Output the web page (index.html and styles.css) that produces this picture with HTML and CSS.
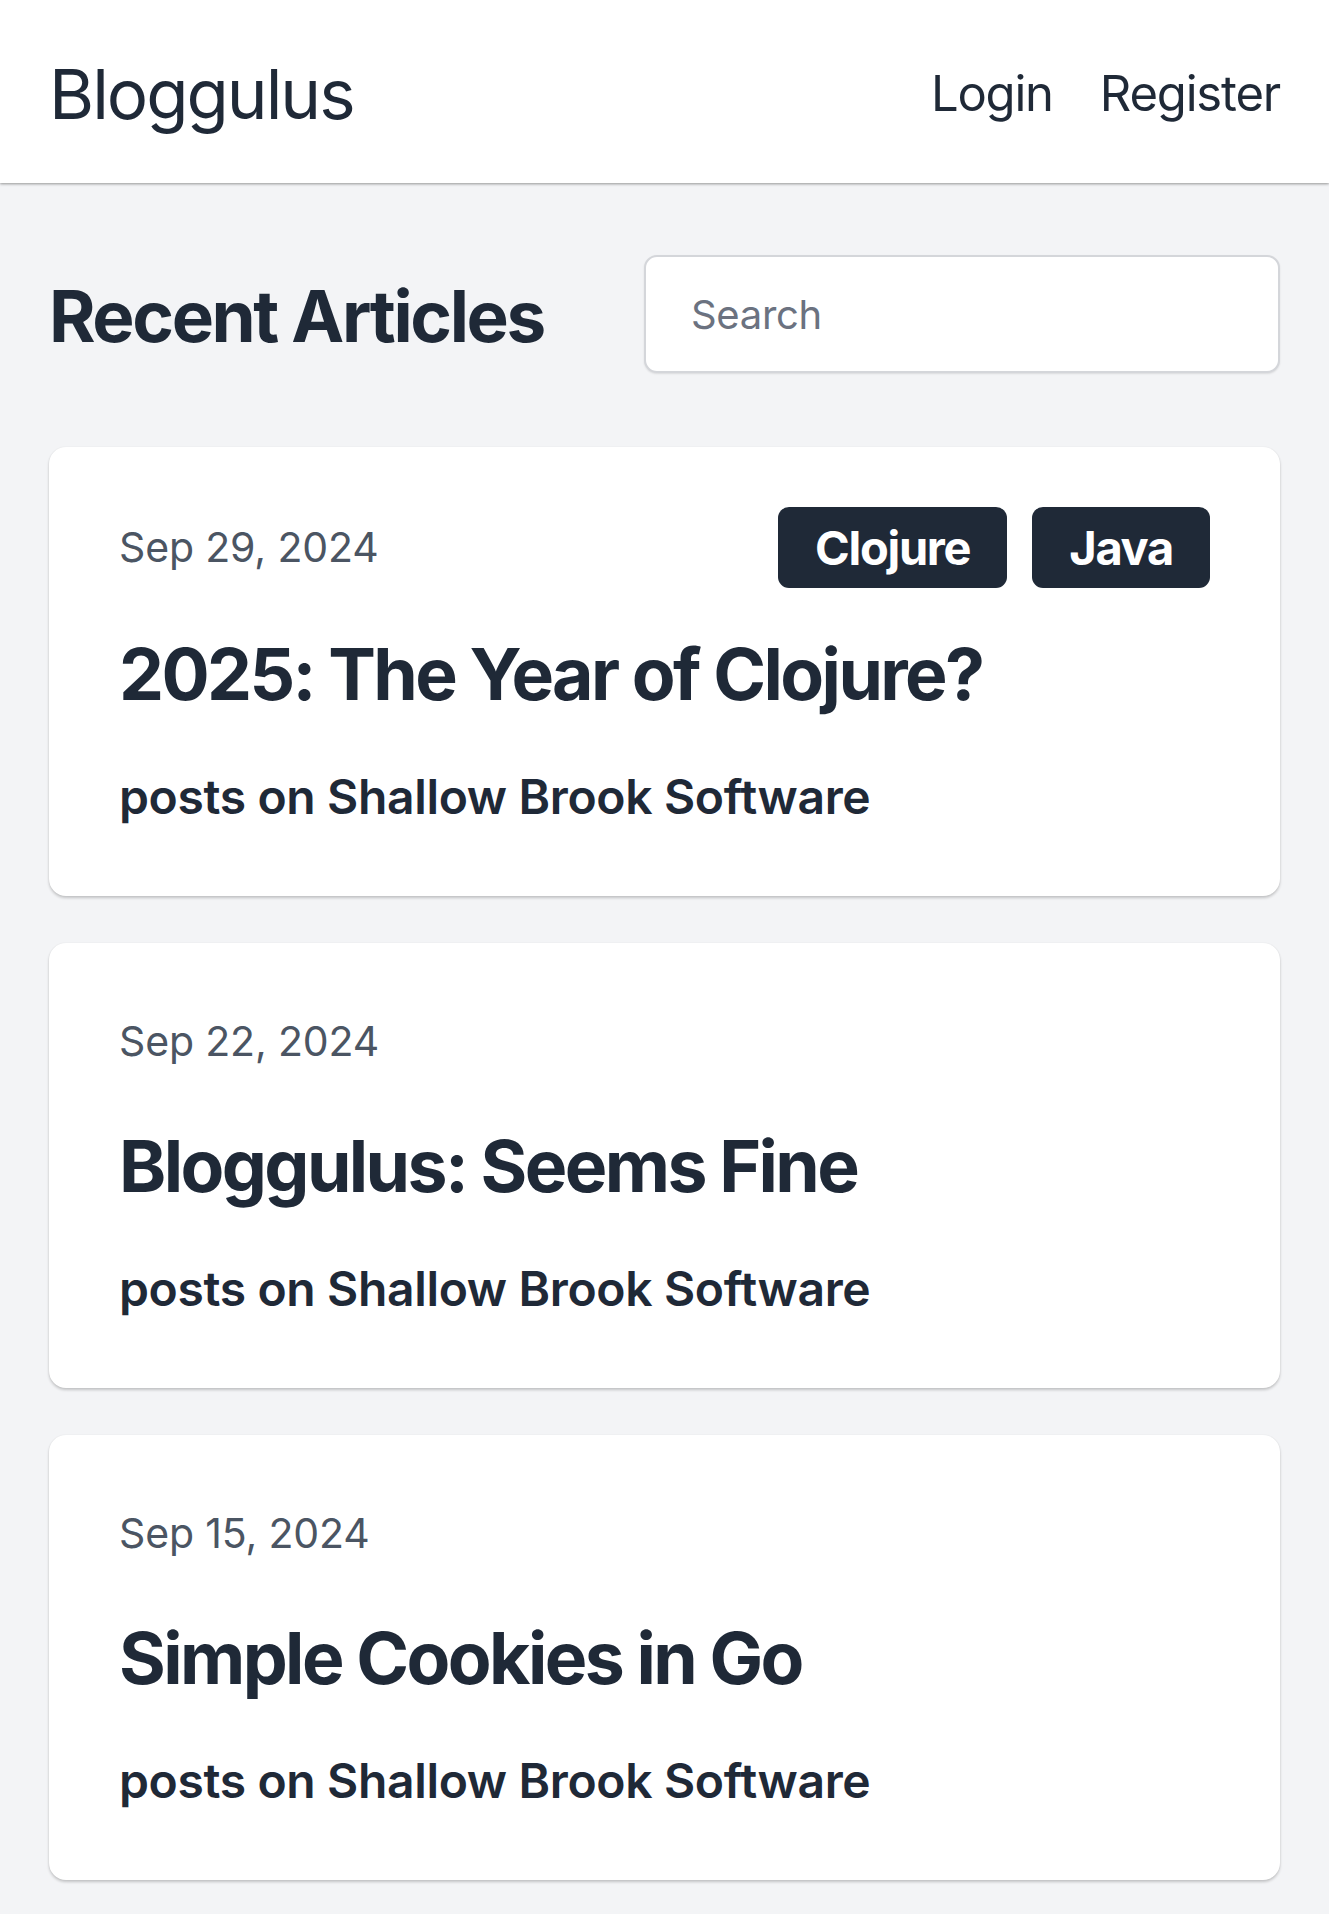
FILE: index.html
```html
<!DOCTYPE html>
<html lang="en">
<head>
<meta charset="utf-8">
<title>Bloggulus</title>
<link rel="stylesheet" href="styles.css">
</head>
<body>
<header class="site-header">
  <a class="brand" href="#">Bloggulus</a>
  <nav class="nav">
    <a class="nav-link" href="#">Login</a>
    <a class="nav-link" href="#">Register</a>
  </nav>
</header>
<main class="content">
  <div class="page-head">
    <h1 class="page-title">Recent Articles</h1>
    <input class="search" type="text" placeholder="Search">
  </div>
  <div class="articles">
    <article class="card">
      <div class="card-top">
        <span class="date">Sep 29, 2024</span>
        <div class="tags">
          <a class="tag" href="#">Clojure</a>
          <a class="tag" href="#">Java</a>
        </div>
      </div>
      <h2 class="card-title">2025: The Year of Clojure?</h2>
      <p class="card-source">posts on Shallow Brook Software</p>
    </article>
    <article class="card">
      <div class="card-top">
        <span class="date">Sep 22, 2024</span>
      </div>
      <h2 class="card-title">Bloggulus: Seems Fine</h2>
      <p class="card-source">posts on Shallow Brook Software</p>
    </article>
    <article class="card">
      <div class="card-top">
        <span class="date">Sep 15, 2024</span>
      </div>
      <h2 class="card-title">Simple Cookies in Go</h2>
      <p class="card-source">posts on Shallow Brook Software</p>
    </article>
  </div>
</main>
</body>
</html>
```

FILE: styles.css
```css
* { box-sizing: border-box; }

body {
  margin: 0;
  background: #f3f4f6;
  color: #1f2937;
  font-family: Inter, "Noto Sans", "DejaVu Sans", sans-serif;
}

a { color: inherit; text-decoration: none; }

.site-header {
  height: 183px;
  background: #ffffff;
  padding: 6px 49px 0;
  display: flex;
  align-items: center;
  justify-content: space-between;
  box-shadow: 0 1px 3px rgba(0, 0, 0, 0.28), 0 1px 2px rgba(0, 0, 0, 0.14);
  position: relative;
}

.brand {
  font-size: 69px;
  font-weight: 400;
  line-height: 1.2;
  letter-spacing: -2px;
}

.nav {
  display: flex;
  gap: 47px;
}

.nav-link {
  font-size: 49px;
  font-weight: 400;
  line-height: 1.2;
  letter-spacing: -1.2px;
}

.content {
  padding: 72px 49px 40px;
}

.page-head {
  display: flex;
  align-items: center;
  justify-content: space-between;
}

.page-title {
  margin: 0;
  padding-top: 5px;
  font-size: 71px;
  font-weight: 700;
  line-height: 1.2;
  letter-spacing: -2.4px;
}

.search {
  width: 636px;
  height: 118px;
  border: 2px solid #d4d6da;
  border-radius: 13px;
  background: #ffffff;
  padding: 0 45px;
  font-family: inherit;
  font-size: 40px;
  letter-spacing: -0.3px;
  color: #1f2937;
  box-shadow: 0 1px 2px rgba(0, 0, 0, 0.1);
  outline: none;
}

.search::placeholder {
  color: #6b7280;
}

.articles {
  margin-top: 74px;
  display: flex;
  flex-direction: column;
  gap: 47px;
}

.card {
  background: #ffffff;
  border-radius: 17px;
  padding: 60px 70px 63px;
  box-shadow: 0 2px 3px rgba(0, 0, 0, 0.2), 0 0 2px rgba(0, 0, 0, 0.06);
}

.card-top {
  min-height: 77px;
  display: flex;
  align-items: center;
  justify-content: space-between;
}

.date {
  font-size: 41px;
  color: #4b5563;
  line-height: 1.2;
  letter-spacing: -0.15px;
}

.tags {
  display: flex;
  gap: 25px;
}

.tag {
  height: 81px;
  display: flex;
  align-items: center;
  padding: 0 37px;
  background: #1f2937;
  color: #ffffff;
  border-radius: 11px;
  font-size: 47px;
  font-weight: 700;
  letter-spacing: -1.3px;
}

.card-title {
  margin: 43px 0 0;
  font-size: 71.5px;
  font-weight: 700;
  line-height: 86px;
  letter-spacing: -2.6px;
}

.card-source {
  margin: 44px 0 0;
  font-size: 48px;
  font-weight: 600;
  line-height: 72px;
  letter-spacing: -0.35px;
}
```
